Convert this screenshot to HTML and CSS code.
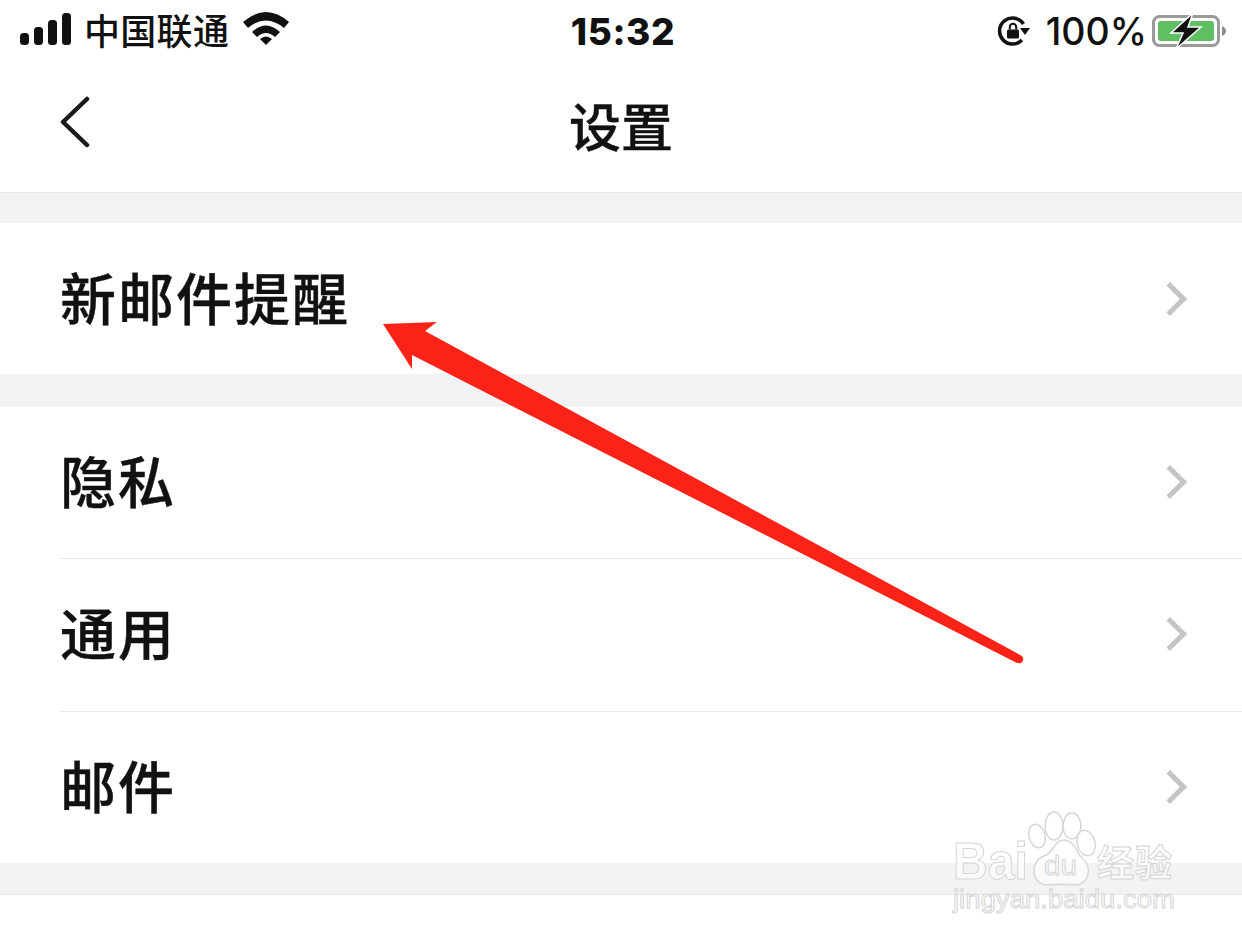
FILE: index.html
```html
<!DOCTYPE html>
<html lang="zh-CN">
<head>
  <meta charset="UTF-8" />
  <title>设置</title>
  <link rel="stylesheet" href="styles.css">
</head>
<body>
  <div class="page">
    <div class="status-bar">
      <div class="status-left">
        <svg class="signal" width="52" height="32" viewBox="0 0 52 32">
          <rect x="0" y="20" width="9" height="12" rx="3.5" />
          <rect x="14" y="14" width="9" height="18" rx="3.5" />
          <rect x="28" y="7" width="9" height="25" rx="3.5" />
          <rect x="42" y="0" width="9" height="32" rx="3.5" />
        </svg>
        <span class="carrier">中国联通</span>
        <svg class="wifi" width="46" height="34" viewBox="0 0 46 34">
          <path d="M0 11 Q23 -9 46 11 L41 17 Q23 2 5 17 Z" />
          <path d="M9 21 Q23 8 37 21 L32 26 Q23 18 14 26 Z" />
          <path d="M17 28 Q23 23 29 28 L23 34 Z" />
        </svg>
      </div>
      <div class="clock">15:32</div>
      <div class="status-right">
        <svg class="lock" width="33" height="32" viewBox="0 0 33 32">
          <path d="M25 25 A13 13 0 1 1 26.500 9" fill="none" stroke="#111" stroke-width="3.500" />
          <path d="M23 13 L33 13 L28 20 Z" fill="#111" />
          <rect x="10" y="14.500" width="12" height="9" rx="1.500" fill="#111" />
          <path d="M12.800 14.500 V12 A3.200 3.200 0 0 1 19.200 12 V14.500" fill="none" stroke="#111" stroke-width="2" />
        </svg>
        <span class="percent">100%</span>
        <svg class="battery" width="74" height="36" viewBox="0 0 74 36">
          <rect x="1.500" y="3.500" width="65" height="29" rx="6" fill="#fff" stroke="#9a9a9a" stroke-width="3" />
          <rect x="6" y="8" width="56" height="20" rx="3" fill="#5fbf63" />
          <path d="M70 13 Q74 15 74 18 Q74 21 70 23 Z" fill="#8a8a8a" />
          <path d="M41 0 L19 20 H31 L24 36 L49 14 H36 Z" fill="#111" stroke="#fff" stroke-width="1.500" />
        </svg>
      </div>
    </div>

    <div class="nav-bar">
      <svg class="back" width="32" height="52" viewBox="0 0 32 52">
        <path d="M28 3 L4 26 L28 49" fill="none" stroke="#1a1a1a" stroke-width="4.500" stroke-linecap="round" stroke-linejoin="round" />
      </svg>
      <h1 class="nav-title">设置</h1>
    </div>

    <div class="gap gap-first"></div>
    <div class="group">
      <div class="row row-single"><span class="row-label">新邮件提醒</span><span class="chev"></span></div>
    </div>
    <div class="gap"></div>
    <div class="group">
      <div class="row"><span class="row-label">隐私</span><span class="chev"></span></div>
      <div class="row"><span class="row-label">通用</span><span class="chev"></span></div>
      <div class="row"><span class="row-label">邮件</span><span class="chev"></span></div>
    </div>
    <div class="gap"></div>

    <!-- 标注箭头 -->
    <svg class="arrow" width="1242" height="943" viewBox="0 0 1242 943">
      <path d="M383 324 L437 322 L425 331 L1022 656 Q1025 660 1021 663 Q1018 664 1015 662 L412 355 L412 369 Z" fill="#fb2317" />
    </svg>

    <!-- 水印 -->
    <svg class="watermark" width="240" height="110" viewBox="0 0 240 110">
      <g class="wm-line">
        <ellipse cx="85" cy="28" rx="8" ry="12" transform="rotate(-15 85 28)" />
        <ellipse cx="102" cy="18" rx="9" ry="14" />
        <ellipse cx="120" cy="18" rx="9" ry="13" />
        <ellipse cx="134" cy="35" rx="9" ry="13" transform="rotate(-15 134 35)" />
        <path d="M96 77 C78 77 78 52 92 48 C102 45 102 32 112 32 C122 32 124 44 130 50 C142 60 136 78 122 77 C112 76 106 76 96 77 Z" />
      </g>
      <text class="wm-big" x="1" y="71" textLength="75" lengthAdjust="spacingAndGlyphs">Bai</text>
      <text class="wm-du" x="92" y="67" textLength="33" lengthAdjust="spacingAndGlyphs">du</text>
      <text class="wm-cn" x="145" y="69" textLength="75">经验</text>
      <text class="wm-url" x="1" y="100" textLength="222" lengthAdjust="spacingAndGlyphs">jingyan.baidu.com</text>
    </svg>
  </div>
</body>
</html>
```

FILE: styles.css
```css
* {
  box-sizing: border-box;
}

html, body {
  margin: 0;
  padding: 0;
  background-color: #fff;
}

.page {
  position: relative;
  width: 1242px;
  height: 943px;
  overflow: hidden;
  font-family: "Noto Sans CJK SC", "Noto Sans", sans-serif;
  color: #111;
}

/* 状态栏 */
.status-bar {
  height: 62px;
  padding: 0 16px 0 20px;
  display: grid;
  grid-template-columns: 1fr auto 1fr;
  align-items: center;
}

.status-left, .status-right {
  display: flex;
  align-items: center;
}

.status-right {
  justify-content: flex-end;
}

.signal {
  fill: #111;
  margin-top: -4px;
}

.carrier {
  margin-left: 12px;
  margin-top: -4px;
  font-size: 36px;
  font-weight: 500;
  letter-spacing: 0.3px;
  line-height: 44px;
}

.wifi {
  fill: #111;
  margin-left: 14px;
  margin-top: -7px;
}

.clock {
  font-family: Inter, "Liberation Sans", sans-serif;
  font-size: 37px;
  font-weight: 800;
  letter-spacing: 0.6px;
}

.percent {
  margin-left: 16px;
  font-family: Inter, "Liberation Sans", sans-serif;
  font-size: 37.5px;
  font-weight: 500;
}

.battery {
  margin-left: 5px;
}

/* 导航栏 */
.nav-bar {
  position: relative;
  height: 131px;
  display: flex;
  align-items: center;
  justify-content: center;
  padding-bottom: 4px;
  border-bottom: 1px solid #e6e6e8;
}

.back {
  position: absolute;
  left: 59px;
  top: 34px;
}

.nav-title {
  margin: 0;
  font-size: 52px;
  font-weight: 500;
  line-height: 1;
  color: #111;
  -webkit-text-stroke: 0.4px #111;
}

.gap {
  height: 32px;
  background-color: #f2f3f5;
  border-bottom: 1px solid #e9e9eb;
}

.gap-first {
  height: 30px;
  border-bottom: none;
}

.row {
  position: relative;
  height: 152.33px;
  padding: 0 60px 6px 60px;
  display: flex;
  align-items: center;
  justify-content: space-between;
}

.row-single {
  height: 151px;
}

.row + .row::before {
  content: "";
  position: absolute;
  top: 0;
  left: 60px;
  right: 0;
  border-top: 1px solid #eaeaec;
}

.row-label {
  font-size: 56px;
  font-weight: 500;
  letter-spacing: 2px;
  line-height: 1;
  color: #111;
  -webkit-text-stroke: 0.4px #111;
}

.chev {
  width: 24px;
  height: 24px;
  margin-top: 6px;
  border-top: 5px solid #c4c4c6;
  border-right: 5px solid #c4c4c6;
  transform: rotate(45deg);
}

.arrow {
  position: absolute;
  left: 0;
  top: 0;
}

/* 水印 */
.watermark {
  position: absolute;
  left: 952px;
  top: 808px;
}

.wm-line ellipse, .wm-line path {
  fill: rgba(255, 255, 255, 0.6);
  stroke: #d6d6d6;
  stroke-width: 1.5;
}

.watermark text {
  fill: rgba(255, 255, 255, 0.6);
  stroke: #d4d4d4;
  stroke-width: 1;
  font-family: "Liberation Sans", sans-serif;
}

.watermark .wm-big {
  font-size: 52px;
  font-weight: 700;
}

.watermark .wm-du {
  font-size: 28px;
}

.watermark .wm-cn {
  font-family: "Noto Sans CJK SC", sans-serif;
  font-size: 37px;
  font-weight: 700;
}

.watermark .wm-url {
  font-size: 26px;
}
```
